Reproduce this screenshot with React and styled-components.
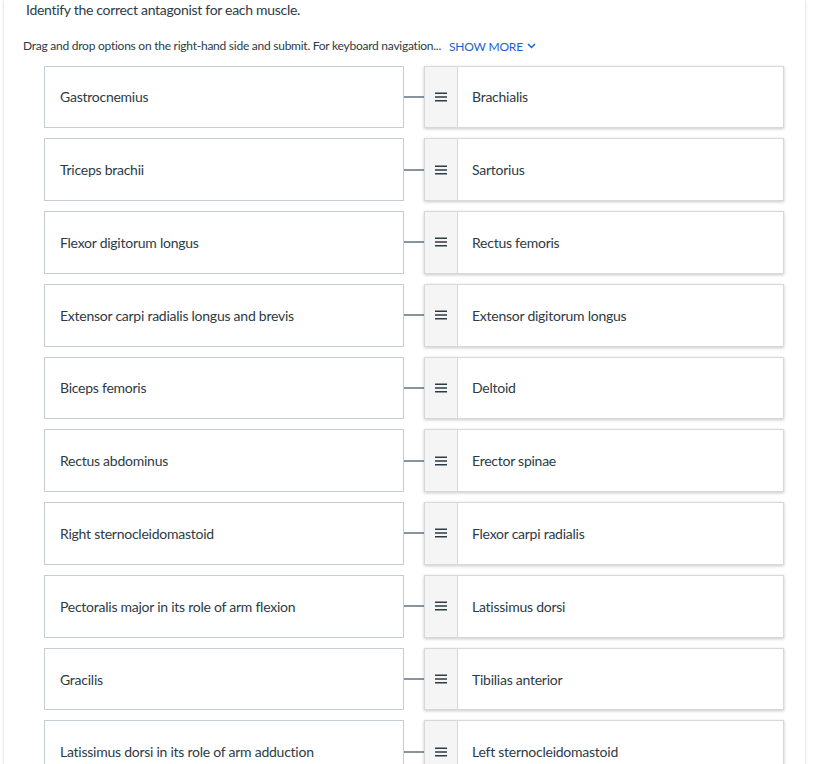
import React from 'react'
import styled, { createGlobalStyle } from 'styled-components'

const GlobalStyle = createGlobalStyle`
    body {
        margin: 0;
        background: #ffffff;
        font-family: Lato, 'Noto Sans', sans-serif;
        color: #2d3b45;
    }
`

// Styled components
const Card = styled.div`
    margin: 0 16px 0 4px;
    background: #ffffff;
    box-shadow: 0 0 3px rgba(0, 0, 0, 0.18);
    padding: 0 0 40px 0;
    min-height: 764px;
    box-sizing: border-box;
`
const Title = styled.div`
    font-size: 14px;
    line-height: 20px;
    letter-spacing: -0.3px;
    padding: 0 0 0 22px;
    color: #2d3b45;
`
const Instructions = styled.div`
    font-size: 12px;
    line-height: 16px;
    letter-spacing: -0.25px;
    padding: 18px 0 0 19px;
    color: #2d3b45;
    display: flex;
    align-items: center;
`
const ShowMore = styled.button`
    border: none;
    background: none;
    padding: 0;
    margin-left: 8px;
    font-family: inherit;
    font-size: 12px;
    letter-spacing: -0.2px;
    color: #1b5fd0;
    text-transform: uppercase;
    display: inline-flex;
    align-items: center;
    gap: 4px;
    cursor: pointer;
`
const List = styled.div`
    display: flex;
    flex-direction: column;
    gap: 10px;
    padding: 11.5px 0 0 40px;
`
const Row = styled.div`
    display: flex;
    align-items: center;
    height: 62.78px;
`
const Prompt = styled.div`
    width: 360px;
    height: 100%;
    box-sizing: border-box;
    border: 1px solid #c8cdd1;
    display: flex;
    align-items: center;
    padding-left: 15px;
    font-size: 14px;
    letter-spacing: -0.25px;
`
const Connector = styled.div`
    width: 20px;
    height: 2px;
    background: #8895a1;
`
const Answer = styled.div`
    width: 360px;
    height: 100%;
    box-sizing: border-box;
    border: 1px solid #d5d9dc;
    box-shadow: 0 1px 3px rgba(0, 0, 0, 0.22);
    display: flex;
    background: #ffffff;
    cursor: grab;
`
const Handle = styled.div`
    width: 32px;
    flex-shrink: 0;
    background: #f5f5f6;
    border-right: 1px solid #d5d9dc;
    display: flex;
    align-items: center;
    justify-content: center;
`
const Label = styled.div`
    display: flex;
    align-items: center;
    padding-left: 14px;
    font-size: 14px;
    letter-spacing: -0.25px;
`

const HandleIcon = () => (
    <svg width="12" height="10" viewBox="0 0 12 10">
        <rect x="0" y="0.5" width="12" height="1.5" fill="#2d3b45" />
        <rect x="0" y="4.25" width="12" height="1.5" fill="#2d3b45" />
        <rect x="0" y="8" width="12" height="1.5" fill="#2d3b45" />
    </svg>
)

const Chevron = () => (
    <svg width="9" height="6" viewBox="0 0 9 6">
        <path d="M1 1l3.5 3.5L8 1" fill="none" stroke="#1b5fd0" strokeWidth="1.5" />
    </svg>
)

const pairs = [
    ['Gastrocnemius', 'Brachialis'],
    ['Triceps brachii', 'Sartorius'],
    ['Flexor digitorum longus', 'Rectus femoris'],
    ['Extensor carpi radialis longus and brevis', 'Extensor digitorum longus'],
    ['Biceps femoris', 'Deltoid'],
    ['Rectus abdominus', 'Erector spinae'],
    ['Right sternocleidomastoid', 'Flexor carpi radialis'],
    ['Pectoralis major in its role of arm flexion', 'Latissimus dorsi'],
    ['Gracilis', 'Tibilias anterior'],
    ['Latissimus dorsi in its role of arm adduction', 'Left sternocleidomastoid'],
]

const App = () => {
    return (
        <>
            <GlobalStyle />
            <Card>
                <Title>Identify the correct antagonist for each muscle.</Title>
                <Instructions>
                    Drag and drop options on the right-hand side and submit. For keyboard navigation...
                    <ShowMore>
                        Show more <Chevron />
                    </ShowMore>
                </Instructions>
                <List>
                    {pairs.map(([left, right]) => (
                        <Row key={left}>
                            <Prompt>{left}</Prompt>
                            <Connector />
                            <Answer>
                                <Handle>
                                    <HandleIcon />
                                </Handle>
                                <Label>{right}</Label>
                            </Answer>
                        </Row>
                    ))}
                </List>
            </Card>
        </>
    )
}

export default App
